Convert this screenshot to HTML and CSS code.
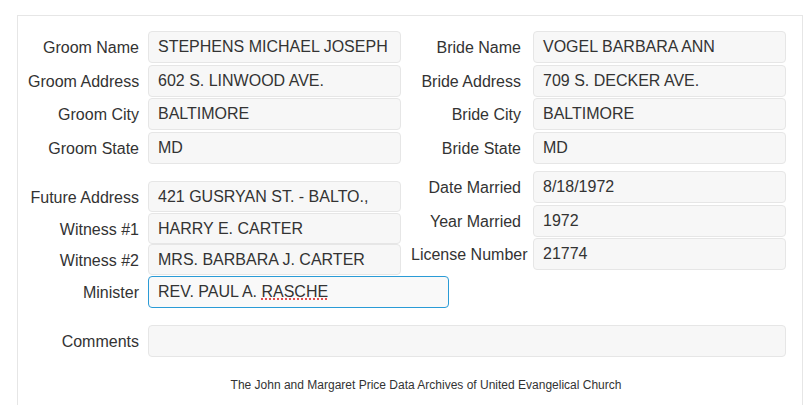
FILE: index.html
```html
<!DOCTYPE html>
<html lang="en">
<head>
<meta charset="UTF-8">
<meta name="viewport" content="width=device-width, initial-scale=1.0">
<title>Marriage Record</title>
<link rel="stylesheet" href="styles.css">
</head>
<body>
  <div class="panel">
    <div class="columns">
      <div class="col col-left">
        <div class="group">
          <div class="row"><label class="label">Groom Name</label><div class="field">STEPHENS MICHAEL JOSEPH</div></div>
          <div class="row"><label class="label">Groom Address</label><div class="field">602 S. LINWOOD AVE.</div></div>
          <div class="row"><label class="label">Groom City</label><div class="field">BALTIMORE</div></div>
          <div class="row"><label class="label">Groom State</label><div class="field">MD</div></div>
        </div>
        <div class="group group-tight left-second">
          <div class="row"><label class="label">Future Address</label><div class="field">421 GUSRYAN ST. - BALTO.,</div></div>
          <div class="row"><label class="label">Witness #1</label><div class="field">HARRY E. CARTER</div></div>
          <div class="row"><label class="label">Witness #2</label><div class="field">MRS. BARBARA J. CARTER</div></div>
          <div class="row row-tall"><label class="label">Minister</label><div class="field field-focus">REV. PAUL A. <span class="spell">RASCHE</span></div></div>
        </div>
      </div>
      <div class="col col-right">
        <div class="group">
          <div class="row"><label class="label">Bride Name</label><div class="field">VOGEL BARBARA ANN</div></div>
          <div class="row"><label class="label">Bride Address</label><div class="field">709 S. DECKER AVE.</div></div>
          <div class="row"><label class="label">Bride City</label><div class="field">BALTIMORE</div></div>
          <div class="row"><label class="label">Bride State</label><div class="field">MD</div></div>
        </div>
        <div class="group right-second">
          <div class="row"><label class="label">Date Married</label><div class="field">8/18/1972</div></div>
          <div class="row"><label class="label">Year Married</label><div class="field">1972</div></div>
          <div class="row"><label class="label">License Number</label><div class="field">21774</div></div>
        </div>
      </div>
    </div>
    <div class="row comments"><label class="label">Comments</label><div class="field field-wide"></div></div>
    <p class="footer">The John and Margaret Price Data Archives of United Evangelical Church</p>
  </div>
</body>
</html>
```

FILE: styles.css
```css
* {
  box-sizing: border-box;
}

body {
  margin: 0;
  font-family: "Liberation Sans", Arial, sans-serif;
  font-size: 16px;
  color: #333;
  background: #fff;
}

/* outer bordered box */
.panel {
  margin: 15px 2px 0 17px;
  border: 1px solid #e6e6e6;
  padding: 15px 16px 20px 10px;
}

.columns {
  display: flex;
  gap: 10px;
}

.col-left {
  flex: none;
  width: 373px;
}

.col-right {
  flex: none;
  width: 375px;
}

.group {
  display: flex;
  flex-direction: column;
  gap: 1.5px;
}

.group-tight {
  gap: 0.5px;
}

.left-second {
  margin-top: 17.5px;
}

.right-second {
  margin-top: 7.5px;
}

.row {
  display: flex;
  height: 32px;
}

.group-tight .row {
  height: 31px;
}

.group-tight .row-tall {
  height: 32px;
}

.label {
  flex: none;
  line-height: 34px;
  text-align: right;
  white-space: nowrap;
}

.col-left .label,
.comments .label {
  width: 111px;
  margin-right: 9px;
}

.col-right .label {
  width: 110px;
  margin-right: 12px;
}

.field {
  flex: none;
  width: 253px;
  height: 100%;
  padding: 0 9px;
  line-height: 30px;
  background-color: #f7f7f7;
  border: 1px solid #e6e6e6;
  border-radius: 4px;
  white-space: nowrap;
}

.field-focus {
  width: 301px;
  border-color: #2a9bd6;
  background-color: #f9f9f9;
}

.spell {
  text-decoration: underline dotted #d22;
  text-underline-offset: 2px;
}

.comments {
  margin-top: 17px;
}

.field-wide {
  flex: 1;
}

.footer {
  margin: 20px 0 0;
  padding-left: 38px;
  font-size: 12px;
  line-height: 17px;
  text-align: center;
  color: #333;
}
```
